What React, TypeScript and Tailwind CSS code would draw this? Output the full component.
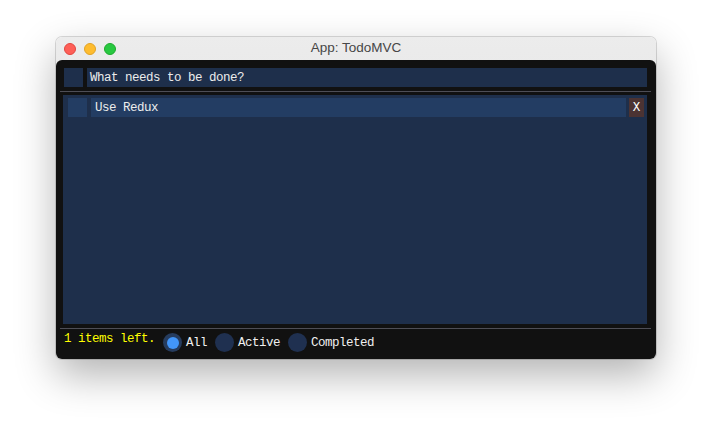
import React from "react";

const mono = { fontFamily: '"Liberation Mono", "DejaVu Sans Mono", monospace' };

function Radio({ label, selected }: { label: string; selected?: boolean }) {
  return (
    <div className="flex items-center h-[19px]">
      <div
        className={`w-[19px] h-[19px] rounded-full flex items-center justify-center ${
          selected ? "bg-[#263c5e]" : "bg-[#1f3050]"
        }`}
      >
        {selected && <div className="w-[12px] h-[12px] rounded-full bg-[#4296fa]" />}
      </div>
      <span className="ml-[4px] text-[#f0f0f0] pt-px">{label}</span>
    </div>
  );
}

export default function App() {
  return (
    <div className="w-[712px] h-[434px] bg-white pt-[37px] pl-[56px]">
      <div className="w-[600px] h-[322px] rounded-[6px] bg-gradient-to-b from-[#ececec] to-[#d6d6d6] shadow-[0_16px_40px_rgba(0,0,0,0.3),0_0_0_1px_rgba(0,0,0,0.14)] flex flex-col">
        <div className="h-[23px] relative flex items-center shrink-0">
          <div className="flex items-center gap-[8px] pl-[8px]">
            <div className="w-[12px] h-[12px] rounded-full bg-[#fe5f57] border border-[#e2463f]" />
            <div className="w-[12px] h-[12px] rounded-full bg-[#febc2e] border border-[#e1a325]" />
            <div className="w-[12px] h-[12px] rounded-full bg-[#28c840] border border-[#1daa2c]" />
          </div>
          <div
            className="absolute inset-0 flex items-center justify-center text-[13.5px] text-[#474747]"
            style={{ fontFamily: '"Liberation Sans", Arial, sans-serif' }}
          >
            App: TodoMVC
          </div>
        </div>
        <div
          className="flex-1 bg-[#111111] rounded-[6px] pt-[8px] pl-[8px] pr-[9px] pb-[7px] flex flex-col text-[12.5px] tracking-[-0.5px] leading-[13px] text-[#ececec]"
          style={mono}
        >
          <div className="flex h-[19px] gap-[4px]">
            <div className="w-[19px] h-[19px] bg-[#1e2f4b]" />
            <div className="flex-1 bg-[#1e2f4b] flex items-center pl-[3px] pt-px">What needs to be done?</div>
          </div>
          <div className="mt-[4px] h-px bg-[#4e4e56] -ml-[4px] -mr-[4px]" />
          <div className="mt-[3px] h-[229px] bg-[#1e2f4b] pt-[3px] pl-[5px] pr-[3px] -ml-px">
            <div className="flex h-[19px]">
              <div className="w-[19px] h-[19px] bg-[#233d63]" />
              <div className="ml-[4px] flex-1 bg-[#233d63] flex items-center pl-[4px] pt-px">Use Redux</div>
              <div className="ml-[3px] w-[15px] h-[19px] bg-[#4b3333] flex items-center justify-center text-white tracking-normal pt-px">
                X
              </div>
            </div>
          </div>
          <div className="mt-[4px] h-px bg-[#4e4e56] -ml-[4px] -mr-[4px]" />
          <div className="mt-[4px] h-[19px] flex gap-[8px]">
            <span className="self-start text-[#ffff00]">1 items left.</span>
            <Radio label="All" selected />
            <Radio label="Active" />
            <Radio label="Completed" />
          </div>
        </div>
      </div>
    </div>
  );
}
